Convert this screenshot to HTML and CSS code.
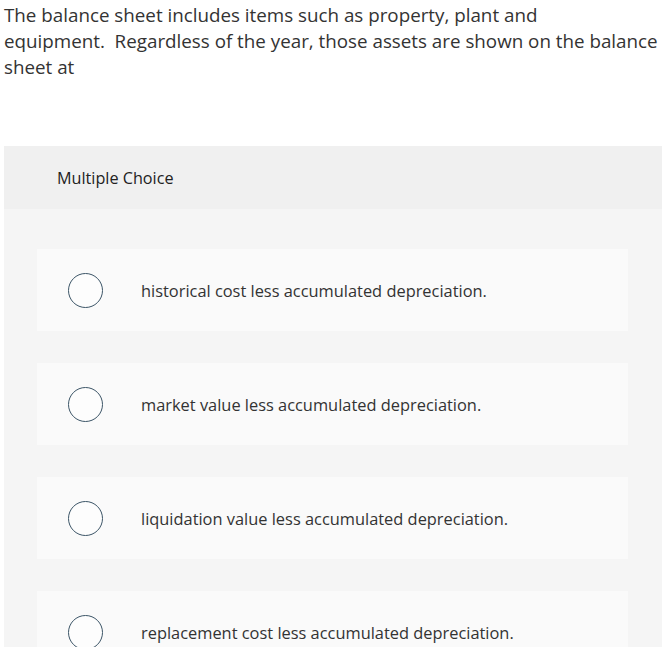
FILE: index.html
```html
<!DOCTYPE html>
<html>
<head>
<meta charset="utf-8">
<link rel="stylesheet" href="styles.css">
</head>
<body>
<div class="question">The balance sheet includes items such as property, plant and<br>equipment.&nbsp; Regardless of the year, those assets are shown on the balance<br>sheet at</div>
<div class="panel">
  <div class="panel-head">Multiple Choice</div>
  <div class="panel-body">
    <div class="option"><span class="radio"></span><span class="label">historical cost less accumulated depreciation.</span></div>
    <div class="option"><span class="radio"></span><span class="label">market value less accumulated depreciation.</span></div>
    <div class="option"><span class="radio"></span><span class="label">liquidation value less accumulated depreciation.</span></div>
    <div class="option"><span class="radio"></span><span class="label">replacement cost less accumulated depreciation.</span></div>
  </div>
</div>
</body>
</html>
```
FILE: styles.css
```css
html, body {
  margin: 0;
  padding: 0;
  background: #ffffff;
  overflow: hidden;
}
body {
  font-family: "Open Sans", "Liberation Sans", sans-serif;
  color: #333333;
}
.question {
  padding: 2px 0 0 4px;
  font-size: 18.8px;
  line-height: 26px;
  white-space: nowrap;
  color: #333;
}
.panel {
  margin: 66px 4px 0 4px;
  background: #f5f5f5;
  height: 600px;
}
.panel-head {
  background: #f0f0f0;
  height: 63px;
  display: flex;
  align-items: center;
  padding-left: 53px;
  font-size: 16.2px;
  color: #222;
}
.panel-body {
  padding: 40px 34px 0 33px;
  display: flex;
  flex-direction: column;
  gap: 32px;
}
.option {
  background: #fafafa;
  height: 82px;
  display: flex;
  align-items: center;
  padding-left: 31px;
}
.radio {
  width: 33px;
  height: 33px;
  border: 1.5px solid #3c5567;
  border-radius: 50%;
  flex: none;
  background: #fdfdfd;
}
.label {
  margin-left: 38px;
  font-size: 16.4px;
  color: #333;
}
```
